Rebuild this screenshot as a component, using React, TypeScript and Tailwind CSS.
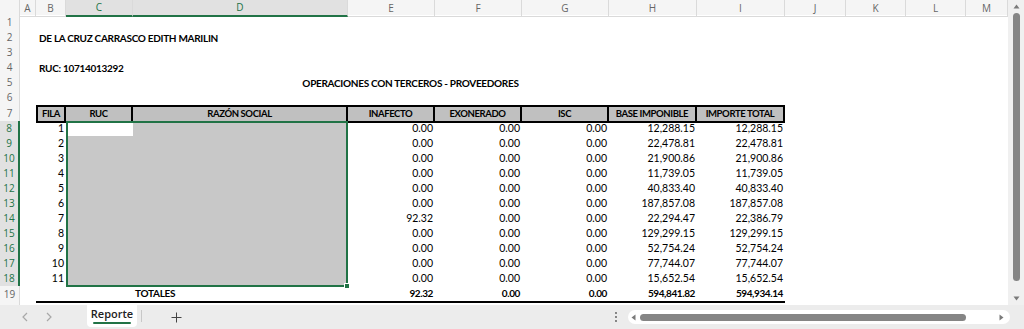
import React from 'react';

const GRID =
  'grid grid-cols-[20px_16px_30px_67px_215px_87px_87px_87px_88px_88px_61px_60px_60px_42px]';

const letters = ['A', 'B', 'C', 'D', 'E', 'F', 'G', 'H', 'I', 'J', 'K', 'L', 'M'];

const rows = [
  { fila: 1, inafecto: '0.00', base: '12,288.15', total: '12,288.15' },
  { fila: 2, inafecto: '0.00', base: '22,478.81', total: '22,478.81' },
  { fila: 3, inafecto: '0.00', base: '21,900.86', total: '21,900.86' },
  { fila: 4, inafecto: '0.00', base: '11,739.05', total: '11,739.05' },
  { fila: 5, inafecto: '0.00', base: '40,833.40', total: '40,833.40' },
  { fila: 6, inafecto: '0.00', base: '187,857.08', total: '187,857.08' },
  { fila: 7, inafecto: '92.32', base: '22,294.47', total: '22,386.79' },
  { fila: 8, inafecto: '0.00', base: '129,299.15', total: '129,299.15' },
  { fila: 9, inafecto: '0.00', base: '52,754.24', total: '52,754.24' },
  { fila: 10, inafecto: '0.00', base: '77,744.07', total: '77,744.07' },
  { fila: 11, inafecto: '0.00', base: '15,652.54', total: '15,652.54' },
];

const headers = ['FILA', 'RUC', 'RAZÓN SOCIAL', 'INAFECTO', 'EXONERADO', 'ISC', 'BASE IMPONIBLE', 'IMPORTE TOTAL'];

const RowNum = ({ n, selected }: { n?: number; selected?: boolean }) => (
  <div
    className={
      selected
        ? 'flex items-center justify-center border-b border-[#dadada] border-r-2 border-r-[#217346] bg-[#e1e1e1] text-[#217346] font-["Open_Sans",sans-serif] text-[10px]'
        : 'flex items-center justify-center border-b border-r border-[#dadada] bg-[#f5f5f5] text-[#666] font-["Open_Sans",sans-serif] text-[10px]'
    }
  >
    {n}
  </div>
);

const Num = ({ v }: { v: string }) => (
  <div className="flex items-center justify-end pr-[2px]">{v}</div>
);

export default function App() {
  return (
    <div className="flex h-[329px] w-[1024px] flex-col overflow-hidden bg-white font-['Lato',sans-serif] text-[10.5px] text-black">
      <div className="flex h-[305px]">
        <div className="flex-1 overflow-hidden">
          {/* column headers */}
          <div className={`${GRID} h-[15px] bg-[#f5f5f5] font-['Open_Sans',sans-serif] text-[10px] text-[#666]`}>
            <div className="border-b border-r border-[#dadada]" />
            {letters.map((l) => {
              const sel = l === 'C' || l === 'D';
              return (
                <div
                  key={l}
                  className={
                    sel
                      ? 'flex items-center justify-center border-r border-[#dadada] border-b-2 border-b-[#217346] bg-[#e1e1e1] text-[#217346]'
                      : 'flex items-center justify-center border-b border-r border-[#dadada]'
                  }
                >
                  {l}
                </div>
              );
            })}
          </div>

          {/* rows 1-6 */}
          {[1, 2, 3, 4, 5, 6].map((n) => (
            <div key={n} className={`${GRID} h-[15px]`}>
              <RowNum n={n} />
              {n === 2 && (
                <div className="col-start-3 col-span-10 flex items-center whitespace-nowrap pl-[3px] text-[10px] font-bold tracking-[-0.3px]">
                  DE LA CRUZ CARRASCO EDITH MARILIN
                </div>
              )}
              {n === 4 && (
                <div className="col-start-3 col-span-10 flex items-center whitespace-nowrap pl-[3px] text-[10px] font-bold tracking-[-0.3px]">
                  RUC: 10714013292
                </div>
              )}
              {n === 5 && (
                <div className="col-start-3 col-span-8 flex items-center justify-center whitespace-nowrap text-[10px] font-bold tracking-[-0.3px]">
                  OPERACIONES CON TERCEROS - PROVEEDORES
                </div>
              )}
            </div>
          ))}

          {/* row 7: table header */}
          <div className={`${GRID} h-[16px]`}>
            <RowNum n={7} />
            <div />
            {headers.map((h, i) => (
              <div
                key={h}
                className={`flex items-center justify-center border-y-2 border-r-2 border-black bg-[#c0c0c0] text-[9.5px] font-bold tracking-[-0.4px] whitespace-nowrap ${
                  i === 0 ? 'border-l-2' : ''
                }`}
              >
                {h}
              </div>
            ))}
          </div>

          {/* rows 8-18 */}
          {rows.map((r, i) => {
            const first = i === 0;
            const last = i === rows.length - 1;
            const edgeY = `${first ? 'border-t-2' : ''} ${last ? 'border-b-2' : ''}`;
            return (
              <div key={r.fila} className={`${GRID} h-[15px]`}>
                <RowNum n={i + 8} selected />
                <div />
                <Num v={String(r.fila)} />
                <div className={`border-l-2 border-[#217346] ${edgeY} ${first ? 'bg-white' : 'bg-[#c8c8c8]'}`} />
                <div className={`relative border-r-2 border-[#217346] bg-[#c8c8c8] ${edgeY}`}>
                  {last && <div className="absolute -bottom-[4px] -right-[4px] h-[6px] w-[6px] border border-white bg-[#217346]" />}
                </div>
                <Num v={r.inafecto} />
                <Num v="0.00" />
                <Num v="0.00" />
                <Num v={r.base} />
                <Num v={r.total} />
              </div>
            );
          })}

          {/* row 19: totals */}
          <div className={`${GRID} h-[15px]`}>
            <RowNum n={19} />
            <div />
            <div className="border-b-2 border-black" />
            <div className="border-b-2 border-black" />
            <div className="flex items-center border-b-2 border-black pl-[2px] text-[10px] font-bold tracking-[-0.3px]">TOTALES</div>
            {['92.32', '0.00', '0.00', '594,841.82', '594,934.14'].map((v, i) => (
              <div
                key={i}
                className="flex items-center justify-end border-b-2 border-black pr-[2px] text-[10px] font-bold tracking-[-0.4px]"
              >
                {v}
              </div>
            ))}
          </div>
          <div className={`${GRID} h-[15px]`}>
            <RowNum />
          </div>
        </div>

        {/* vertical scrollbar */}
        <div className="flex w-[16px] flex-col items-center bg-[#f0f0f0] pt-[2px] pb-[2px]">
          <svg width="7" height="5" viewBox="0 0 7 5" className="mt-[2px]">
            <path d="M3.5 0.5 L6.5 4.5 L0.5 4.5 Z" fill="#7a7a7a" />
          </svg>
          <div className="mt-[4px] h-[268px] w-[7px] rounded-full bg-[#858585]" />
          <div className="flex-1" />
          <svg width="7" height="5" viewBox="0 0 7 5" className="mb-[2px]">
            <path d="M0.5 0.5 L6.5 0.5 L3.5 4.5 Z" fill="#7a7a7a" />
          </svg>
        </div>
      </div>

      {/* sheet tab bar */}
      <div className="flex h-[24px] items-start bg-[#ececec] font-['Open_Sans',sans-serif] text-[11px] text-[#333]">
        <div className="flex h-full w-[87px] items-center gap-[16px] pl-[21px]">
          <svg width="8" height="10" viewBox="0 0 8 10">
            <path d="M6 1 L2 5 L6 9" stroke="#a8a8a8" strokeWidth="1.2" fill="none" />
          </svg>
          <svg width="8" height="10" viewBox="0 0 8 10">
            <path d="M2 1 L6 5 L2 9" stroke="#a8a8a8" strokeWidth="1.2" fill="none" />
          </svg>
        </div>
        <div className="flex h-[22px] w-[50px] flex-col items-center rounded-b-[4px] bg-white">
          <span className="mt-[3px] leading-[12px] font-semibold text-[#222]">Reporte</span>
          <span className="mt-[2px] h-[2px] w-[38px] rounded-full bg-[#217346]" />
        </div>
        <div className="ml-[4px] mt-[5px] h-[12px] w-px bg-[#c8c8c8]" />
        <div className="ml-[29px] flex h-full items-center">
          <svg width="11" height="11" viewBox="0 0 11 11">
            <path d="M5.5 0.5 V10.5 M0.5 5.5 H10.5" stroke="#444" strokeWidth="1" />
          </svg>
        </div>
        <div className="flex-1" />
        <div className="flex h-full w-[12px] items-center justify-center">
          <svg width="2" height="10" viewBox="0 0 2 10">
            <circle cx="1" cy="1" r="0.9" fill="#555" />
            <circle cx="1" cy="5" r="0.9" fill="#555" />
            <circle cx="1" cy="9" r="0.9" fill="#555" />
          </svg>
        </div>
        <div className="ml-[6px] mr-[14px] mt-[5px] flex h-[14px] w-[382px] items-center rounded-full bg-white px-[3px]">
          <svg width="5" height="7" viewBox="0 0 5 7">
            <path d="M4.5 0.5 L0.5 3.5 L4.5 6.5 Z" fill="#7a7a7a" />
          </svg>
          <div className="ml-[4px] h-[7px] w-[326px] rounded-full bg-[#858585]" />
          <div className="flex-1" />
          <svg width="5" height="7" viewBox="0 0 5 7" className="mr-[3px]">
            <path d="M0.5 0.5 L4.5 3.5 L0.5 6.5 Z" fill="#7a7a7a" />
          </svg>
        </div>
      </div>
    </div>
  );
}
